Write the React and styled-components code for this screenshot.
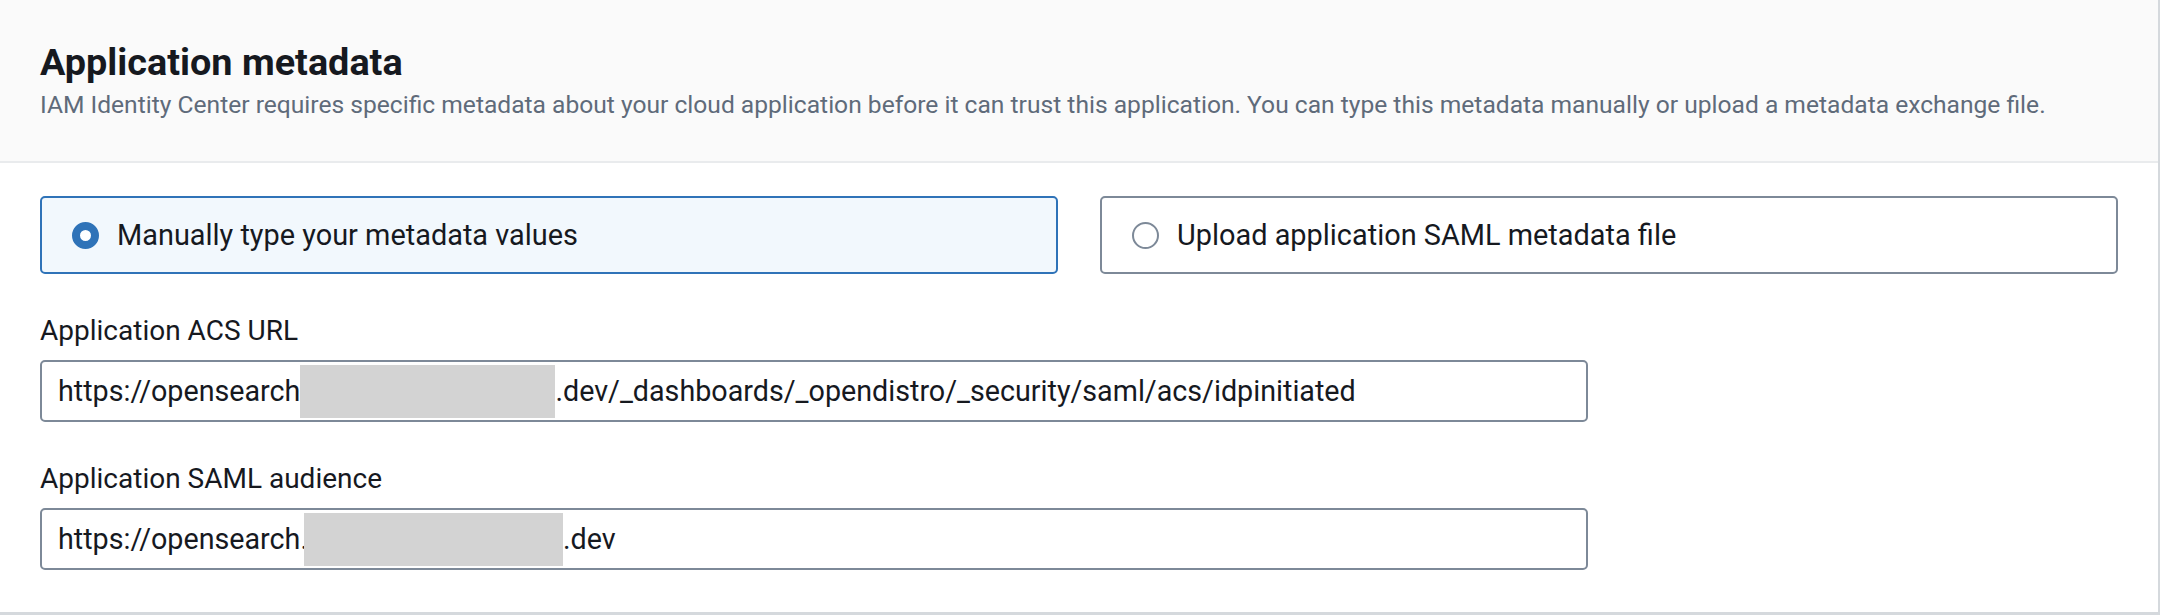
import React from 'react'
import styled, { createGlobalStyle } from 'styled-components'

const Global = createGlobalStyle`
  html, body {
    margin: 0;
    padding: 0;
    background: #ffffff;
  }
  body {
    font-family: Roboto, "Noto Sans", Arial, sans-serif;
    color: #16191f;
  }
`

const options = [
  { id: 'manual', label: 'Manually type your metadata values' },
  { id: 'upload', label: 'Upload application SAML metadata file' },
]

function Radio({ checked }) {
  return <meta.RadioDot checked={checked} />
}

function App() {
  const selected = 'manual'

  return (
    <>
      <Global />
      <meta.Container>
        <meta.Header>
          <meta.Title>Application metadata</meta.Title>
          <meta.Description>
            IAM Identity Center requires specific metadata about your cloud application before it can trust this
            application. You can type this metadata manually or upload a metadata exchange file.
          </meta.Description>
        </meta.Header>

        <meta.Body>
          <meta.Tiles>
            {options.map((o) => (
              <meta.Tile key={o.id} checked={o.id === selected}>
                <Radio checked={o.id === selected} />
                <meta.TileLabel>{o.label}</meta.TileLabel>
              </meta.Tile>
            ))}
          </meta.Tiles>

          <meta.Field>
            <meta.Label>Application ACS URL</meta.Label>
            <meta.Input>
              https://opensearch
              <meta.Redacted width={255} />
              .dev/_dashboards/_opendistro/_security/saml/acs/idpinitiated
            </meta.Input>
          </meta.Field>

          <meta.Field>
            <meta.Label>Application SAML audience</meta.Label>
            <meta.Input>
              https://opensearch.
              <meta.Redacted width={259} pull />
              .dev
            </meta.Input>
          </meta.Field>
        </meta.Body>
      </meta.Container>
    </>
  )
}

const meta = {
  Container: styled.section`
    box-sizing: border-box;
    width: 2160px;
    height: 615px;
    border-right: 2px solid #d5d9dd;
    border-bottom: 3px solid #d5d9dd;
    background: #fff;
  `,

  Header: styled.header`
    background: #fafafa;
    border-bottom: 2px solid #e9ebed;
    padding: 38px 40px 38px;
  `,

  Title: styled.h2`
    margin: 0;
    font-size: 37.8px;
    line-height: 48px;
    font-weight: 700;
    color: #16191f;
  `,

  Description: styled.p`
    margin: 1px 0 0;
    font-size: 24.6px;
    line-height: 36px;
    color: #5f6b7a;
    white-space: nowrap;
  `,

  Body: styled.div`
    padding: 33px 40px 0;
    display: flex;
    flex-direction: column;
    gap: 37px;
  `,

  Tiles: styled.div`
    display: grid;
    grid-template-columns: 1fr 1fr;
    gap: 42px;
  `,

  Tile: styled.div`
    box-sizing: border-box;
    height: 78px;
    display: flex;
    align-items: center;
    gap: 18px;
    padding: 0 30px;
    border: 2px solid ${(p) => (p.checked ? '#2f73b8' : '#7d8998')};
    border-radius: 5px;
    background: ${(p) => (p.checked ? '#f2f8fd' : '#ffffff')};
  `,

  RadioDot: styled.span`
    box-sizing: border-box;
    flex: none;
    width: 27px;
    height: 27px;
    border-radius: 50%;
    background: #fff;
    border: ${(p) => (p.checked ? '8px solid #2f73b8' : '2px solid #7d8998')};
  `,

  TileLabel: styled.span`
    font-size: 28.9px;
    line-height: 38px;
    color: #16191f;
  `,

  Field: styled.div`
    display: flex;
    flex-direction: column;
    gap: 9px;
  `,

  Label: styled.label`
    font-size: 28px;
    line-height: 40px;
    color: #16191f;
  `,

  Input: styled.div`
    box-sizing: border-box;
    width: 1548px;
    height: 62px;
    display: flex;
    align-items: center;
    padding: 0 16px;
    border: 2px solid #7d8998;
    border-radius: 5px;
    font-size: 28.7px;
    color: #16191f;
    white-space: pre;
  `,

  Redacted: styled.span`
    display: inline-block;
    width: ${(p) => p.width}px;
    height: 53px;
    margin-left: ${(p) => (p.pull ? '-4px' : '0')};
    background: #d3d3d3;
  `,
}

export default App
